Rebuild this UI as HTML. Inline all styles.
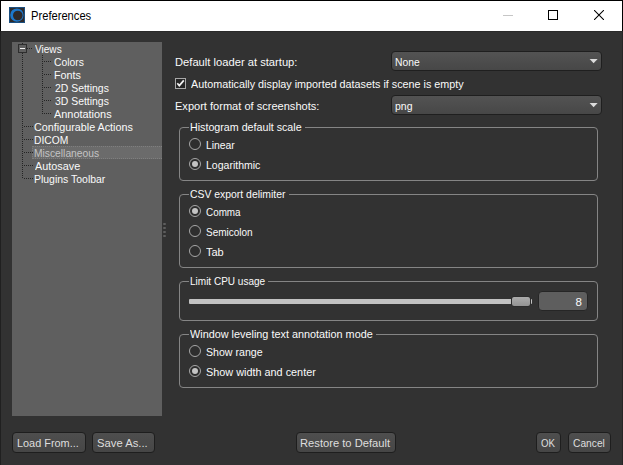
<!DOCTYPE html><html><head><meta charset="utf-8"><style>
*{margin:0;padding:0;box-sizing:border-box}
html,body{width:623px;height:465px;overflow:hidden;background:#323232}
body{position:relative;font-family:"Liberation Sans",sans-serif;font-size:11.5px;color:#fafafa}
.a{position:absolute}
.t{position:absolute;white-space:nowrap;line-height:14px;height:14px;transform-origin:0 0}
.combo{position:absolute;border:1px solid #1f1f1f;border-radius:4px;background:linear-gradient(#535353,#474747)}
.arrow{position:absolute;width:0;height:0;border-left:4px solid transparent;border-right:4px solid transparent;border-top:4px solid #e6e6e6}
.group{position:absolute;border:1px solid #858585;border-radius:4px}
.gap{position:absolute;height:3px;background:#323232}
.radio{position:absolute;width:12px;height:12px;border-radius:50%;border:1px solid #a6a6a6;background:#2e2e2e}
.radio.on::after{content:"";position:absolute;left:2px;top:2px;width:6px;height:6px;border-radius:50%;background:#c4c4c4}
.btn{position:absolute;height:21px;border:1px solid #1e1e1e;border-radius:4px;background:linear-gradient(#4e4e4e,#464646)}
</style></head><body>
<div class="a" style="left:0;top:0;width:623px;height:31px;background:#fff;border:1px solid #000;border-bottom:none"></div>
<div class="a" style="left:0;top:31px;width:1px;height:434px;background:#202020"></div>
<div class="a" style="left:622px;top:31px;width:1px;height:434px;background:#262626"></div>
<div class="a" style="left:1px;top:31px;width:621px;height:1px;background:#2a2a2a"></div>
<svg class="a" style="left:9px;top:7px" width="16" height="16" viewBox="0 0 16 16">
<rect x="0.5" y="0.5" width="15" height="15" fill="#2e2a2a" stroke="#1b4f80" stroke-width="1"/>
<path fill="#1c78cc" fill-rule="evenodd" d="M7.9 1.4A6.7 6.7 0 1 1 7.9 14.8A6.7 6.7 0 1 1 7.9 1.4ZM8.8 3.7A4.8 4.8 0 1 0 8.8 13.3A4.8 4.8 0 1 0 8.8 3.7Z"/>
</svg>
<div class="t" style="left:30.80px;top:9px;font-size:12px;color:#000;transform:scaleX(0.9305)">Preferences</div>
<div class="a" style="left:503px;top:15px;width:10px;height:1px;background:#c6c6c6"></div>
<div class="a" style="left:548px;top:10px;width:10px;height:10px;border:1px solid #000"></div>
<svg class="a" style="left:594px;top:10px" width="10" height="10" viewBox="0 0 10 10"><path d="M0 0L10 10M10 0L0 10" stroke="#000" stroke-width="1.05"/></svg>
<div class="a" style="left:12px;top:42px;width:150px;height:374px;background:#5f5f5f"></div>
<div class="a" style="left:32px;top:146px;width:130px;height:13px;background:#6b6b6b;border:1px dotted #7f7f7f;border-right:none"></div>
<svg class="a" style="left:0;top:0" width="623" height="465" fill="#242424"><rect x="22" y="43" width="1" height="1"/><rect x="22" y="53" width="1" height="1"/><rect x="22" y="55" width="1" height="1"/><rect x="22" y="57" width="1" height="1"/><rect x="22" y="59" width="1" height="1"/><rect x="22" y="61" width="1" height="1"/><rect x="22" y="63" width="1" height="1"/><rect x="22" y="65" width="1" height="1"/><rect x="22" y="67" width="1" height="1"/><rect x="22" y="69" width="1" height="1"/><rect x="22" y="71" width="1" height="1"/><rect x="22" y="73" width="1" height="1"/><rect x="22" y="75" width="1" height="1"/><rect x="22" y="77" width="1" height="1"/><rect x="22" y="79" width="1" height="1"/><rect x="22" y="81" width="1" height="1"/><rect x="22" y="83" width="1" height="1"/><rect x="22" y="85" width="1" height="1"/><rect x="22" y="87" width="1" height="1"/><rect x="22" y="89" width="1" height="1"/><rect x="22" y="91" width="1" height="1"/><rect x="22" y="93" width="1" height="1"/><rect x="22" y="95" width="1" height="1"/><rect x="22" y="97" width="1" height="1"/><rect x="22" y="99" width="1" height="1"/><rect x="22" y="101" width="1" height="1"/><rect x="22" y="103" width="1" height="1"/><rect x="22" y="105" width="1" height="1"/><rect x="22" y="107" width="1" height="1"/><rect x="22" y="109" width="1" height="1"/><rect x="22" y="111" width="1" height="1"/><rect x="22" y="113" width="1" height="1"/><rect x="22" y="115" width="1" height="1"/><rect x="22" y="117" width="1" height="1"/><rect x="22" y="119" width="1" height="1"/><rect x="22" y="121" width="1" height="1"/><rect x="22" y="123" width="1" height="1"/><rect x="22" y="125" width="1" height="1"/><rect x="22" y="127" width="1" height="1"/><rect x="22" y="129" width="1" height="1"/><rect x="22" y="131" width="1" height="1"/><rect x="22" y="133" width="1" height="1"/><rect x="22" y="135" width="1" height="1"/><rect x="22" y="137" width="1" height="1"/><rect x="22" y="139" width="1" height="1"/><rect x="22" y="141" width="1" height="1"/><rect x="22" y="143" width="1" height="1"/><rect x="22" y="145" width="1" height="1"/><rect x="22" y="147" width="1" height="1"/><rect x="22" y="149" width="1" height="1"/><rect x="22" y="151" width="1" height="1"/><rect x="22" y="153" width="1" height="1"/><rect x="22" y="155" width="1" height="1"/><rect x="22" y="157" width="1" height="1"/><rect x="22" y="159" width="1" height="1"/><rect x="22" y="161" width="1" height="1"/><rect x="22" y="163" width="1" height="1"/><rect x="22" y="165" width="1" height="1"/><rect x="22" y="167" width="1" height="1"/><rect x="22" y="169" width="1" height="1"/><rect x="22" y="171" width="1" height="1"/><rect x="22" y="173" width="1" height="1"/><rect x="22" y="175" width="1" height="1"/><rect x="22" y="177" width="1" height="1"/><rect x="27" y="48" width="1" height="1"/><rect x="29" y="48" width="1" height="1"/><rect x="31" y="48" width="1" height="1"/><rect x="24" y="126" width="1" height="1"/><rect x="26" y="126" width="1" height="1"/><rect x="28" y="126" width="1" height="1"/><rect x="30" y="126" width="1" height="1"/><rect x="32" y="126" width="1" height="1"/><rect x="24" y="139" width="1" height="1"/><rect x="26" y="139" width="1" height="1"/><rect x="28" y="139" width="1" height="1"/><rect x="30" y="139" width="1" height="1"/><rect x="32" y="139" width="1" height="1"/><rect x="24" y="152" width="1" height="1"/><rect x="26" y="152" width="1" height="1"/><rect x="28" y="152" width="1" height="1"/><rect x="30" y="152" width="1" height="1"/><rect x="32" y="152" width="1" height="1"/><rect x="24" y="165" width="1" height="1"/><rect x="26" y="165" width="1" height="1"/><rect x="28" y="165" width="1" height="1"/><rect x="30" y="165" width="1" height="1"/><rect x="32" y="165" width="1" height="1"/><rect x="24" y="178" width="1" height="1"/><rect x="26" y="178" width="1" height="1"/><rect x="28" y="178" width="1" height="1"/><rect x="30" y="178" width="1" height="1"/><rect x="32" y="178" width="1" height="1"/><rect x="42" y="55" width="1" height="1"/><rect x="42" y="57" width="1" height="1"/><rect x="42" y="59" width="1" height="1"/><rect x="42" y="61" width="1" height="1"/><rect x="42" y="63" width="1" height="1"/><rect x="42" y="65" width="1" height="1"/><rect x="42" y="67" width="1" height="1"/><rect x="42" y="69" width="1" height="1"/><rect x="42" y="71" width="1" height="1"/><rect x="42" y="73" width="1" height="1"/><rect x="42" y="75" width="1" height="1"/><rect x="42" y="77" width="1" height="1"/><rect x="42" y="79" width="1" height="1"/><rect x="42" y="81" width="1" height="1"/><rect x="42" y="83" width="1" height="1"/><rect x="42" y="85" width="1" height="1"/><rect x="42" y="87" width="1" height="1"/><rect x="42" y="89" width="1" height="1"/><rect x="42" y="91" width="1" height="1"/><rect x="42" y="93" width="1" height="1"/><rect x="42" y="95" width="1" height="1"/><rect x="42" y="97" width="1" height="1"/><rect x="42" y="99" width="1" height="1"/><rect x="42" y="101" width="1" height="1"/><rect x="42" y="103" width="1" height="1"/><rect x="42" y="105" width="1" height="1"/><rect x="42" y="107" width="1" height="1"/><rect x="42" y="109" width="1" height="1"/><rect x="42" y="111" width="1" height="1"/><rect x="42" y="113" width="1" height="1"/><rect x="44" y="61" width="1" height="1"/><rect x="46" y="61" width="1" height="1"/><rect x="48" y="61" width="1" height="1"/><rect x="50" y="61" width="1" height="1"/><rect x="44" y="74" width="1" height="1"/><rect x="46" y="74" width="1" height="1"/><rect x="48" y="74" width="1" height="1"/><rect x="50" y="74" width="1" height="1"/><rect x="44" y="87" width="1" height="1"/><rect x="46" y="87" width="1" height="1"/><rect x="48" y="87" width="1" height="1"/><rect x="50" y="87" width="1" height="1"/><rect x="44" y="100" width="1" height="1"/><rect x="46" y="100" width="1" height="1"/><rect x="48" y="100" width="1" height="1"/><rect x="50" y="100" width="1" height="1"/><rect x="44" y="113" width="1" height="1"/><rect x="46" y="113" width="1" height="1"/><rect x="48" y="113" width="1" height="1"/><rect x="50" y="113" width="1" height="1"/></svg>
<div class="a" style="left:18px;top:44px;width:9px;height:9px;border:1px solid #2e2e2e;background:#5f5f5f"></div>
<div class="a" style="left:20px;top:48px;width:5px;height:1px;background:#f4f4f4"></div>
<div class="t" style="left:34.60px;top:42px;transform:scaleX(0.8754)">Views</div>
<div class="t" style="left:54.40px;top:55px;transform:scaleX(0.8992)">Colors</div>
<div class="t" style="left:54.40px;top:68px;transform:scaleX(0.9357)">Fonts</div>
<div class="t" style="left:54.80px;top:81px;transform:scaleX(0.9059)">2D Settings</div>
<div class="t" style="left:54.80px;top:94px;transform:scaleX(0.9059)">3D Settings</div>
<div class="t" style="left:54.40px;top:107px;transform:scaleX(0.9481)">Annotations</div>
<div class="t" style="left:34.40px;top:120px;transform:scaleX(0.9374)">Configurable Actions</div>
<div class="t" style="left:34.40px;top:133px;transform:scaleX(0.8941)">DICOM</div>
<div class="t" style="left:34.40px;top:146px;color:#c4c4c4;transform:scaleX(0.8935)">Miscellaneous</div>
<div class="t" style="left:34.60px;top:159px;transform:scaleX(0.9417)">Autosave</div>
<div class="t" style="left:34.40px;top:172px;transform:scaleX(0.9096)">Plugins Toolbar</div>
<div class="a" style="left:163px;top:222.5px;width:3px;height:2.5px;border-radius:1px;background:#5e5e5e"></div>
<div class="a" style="left:163px;top:226.5px;width:3px;height:2.5px;border-radius:1px;background:#5e5e5e"></div>
<div class="a" style="left:163px;top:230.5px;width:3px;height:2.5px;border-radius:1px;background:#5e5e5e"></div>
<div class="a" style="left:163px;top:234.5px;width:3px;height:2.5px;border-radius:1px;background:#5e5e5e"></div>
<div class="t" style="left:174.50px;top:55px;transform:scaleX(0.9722)">Default loader at startup:</div>
<div class="combo" style="left:391px;top:51px;width:211px;height:20px"></div>
<div class="t" style="left:394.60px;top:55px;transform:scaleX(0.8982)">None</div>
<svg class="a" style="left:589px;top:59px" width="10" height="5"><path d="M0.6 0H8.6L4.6 4.2Z" fill="#dcdcdc"/></svg>
<div class="a" style="left:175px;top:78px;width:11px;height:11px;border:1px solid #a9a9a9;background:#262626"></div>
<svg class="a" style="left:175px;top:78px" width="11" height="11" viewBox="0 0 11 11"><path d="M2.3 5.3L4.3 7.6L8.8 2.4" fill="none" stroke="#f4f4f4" stroke-width="1.7"/></svg>
<div class="t" style="left:191.40px;top:77px;transform:scaleX(0.9376)">Automatically display imported datasets if scene is empty</div>
<div class="t" style="left:174.60px;top:99px;transform:scaleX(0.9611)">Export format of screenshots:</div>
<div class="combo" style="left:391px;top:95px;width:211px;height:20px"></div>
<div class="t" style="left:394.90px;top:99px;transform:scaleX(0.9091)">png</div>
<svg class="a" style="left:589px;top:103px" width="10" height="5"><path d="M0.6 0H8.6L4.6 4.2Z" fill="#dcdcdc"/></svg>
<div class="group" style="left:179px;top:127px;width:419px;height:54px"></div>
<div class="gap" style="left:189px;top:126px;width:115.7px"></div>
<div class="t" style="left:189.50px;top:120px;transform:scaleX(0.9289)">Histogram default scale</div>
<div class="radio" style="left:189px;top:138px"></div>
<div class="t" style="left:206.20px;top:138px;transform:scaleX(0.9000)">Linear</div>
<div class="radio on" style="left:189px;top:158px"></div>
<div class="t" style="left:206.20px;top:158px;transform:scaleX(0.9143)">Logarithmic</div>
<div class="group" style="left:179px;top:194px;width:419px;height:74px"></div>
<div class="gap" style="left:189px;top:193px;width:99.5px"></div>
<div class="t" style="left:189.50px;top:187px;transform:scaleX(0.9052)">CSV export delimiter</div>
<div class="radio on" style="left:189px;top:205px"></div>
<div class="t" style="left:206.40px;top:205px;transform:scaleX(0.8596)">Comma</div>
<div class="radio" style="left:189px;top:225px"></div>
<div class="t" style="left:206.40px;top:225px;transform:scaleX(0.8688)">Semicolon</div>
<div class="radio" style="left:189px;top:245px"></div>
<div class="t" style="left:206.40px;top:245px;transform:scaleX(0.9568)">Tab</div>
<div class="group" style="left:179px;top:281px;width:419px;height:40px"></div>
<div class="gap" style="left:189px;top:280px;width:79.1px"></div>
<div class="t" style="left:189.50px;top:274px;transform:scaleX(0.8707)">Limit CPU usage</div>
<div class="a" style="left:189px;top:299px;width:343px;height:5px;background:#c2c2c2;border-radius:1px"></div>
<div class="a" style="left:511px;top:296px;width:20px;height:11px;border:1px solid #2c2c2c;border-radius:3px;background:linear-gradient(#acacac,#939393)"></div>
<div class="a" style="left:538px;top:291px;width:50px;height:20px;border:1px solid #262626;border-radius:4px;background:#5e5e5e"></div>
<div class="t" style="left:575.40px;top:295px">8</div>
<div class="group" style="left:179px;top:334px;width:419px;height:54px"></div>
<div class="gap" style="left:189px;top:333px;width:186.8px"></div>
<div class="t" style="left:189.50px;top:327px;transform:scaleX(0.9435)">Window leveling text annotation mode</div>
<div class="radio" style="left:189px;top:345px"></div>
<div class="t" style="left:206.30px;top:345px;transform:scaleX(0.9224)">Show range</div>
<div class="radio on" style="left:189px;top:365px"></div>
<div class="t" style="left:206.30px;top:365px;transform:scaleX(0.9437)">Show width and center</div>
<div class="btn" style="left:12px;top:432px;width:74px"></div>
<div class="t" style="left:17.20px;top:436px;color:#dedede;transform:scaleX(0.9471)">Load From...</div>
<div class="btn" style="left:92px;top:432px;width:63px"></div>
<div class="t" style="left:97.20px;top:436px;color:#dedede;transform:scaleX(0.9797)">Save As...</div>
<div class="btn" style="left:296px;top:432px;width:100px"></div>
<div class="t" style="left:300.20px;top:436px;color:#dedede;transform:scaleX(0.9725)">Restore to Default</div>
<div class="btn" style="left:536px;top:432px;width:25px"></div>
<div class="t" style="left:540.80px;top:436px;color:#dedede;transform:scaleX(0.8418)">OK</div>
<div class="btn" style="left:568px;top:432px;width:43px"></div>
<div class="t" style="left:572.60px;top:436px;color:#dedede;transform:scaleX(0.8895)">Cancel</div>
</body></html>
